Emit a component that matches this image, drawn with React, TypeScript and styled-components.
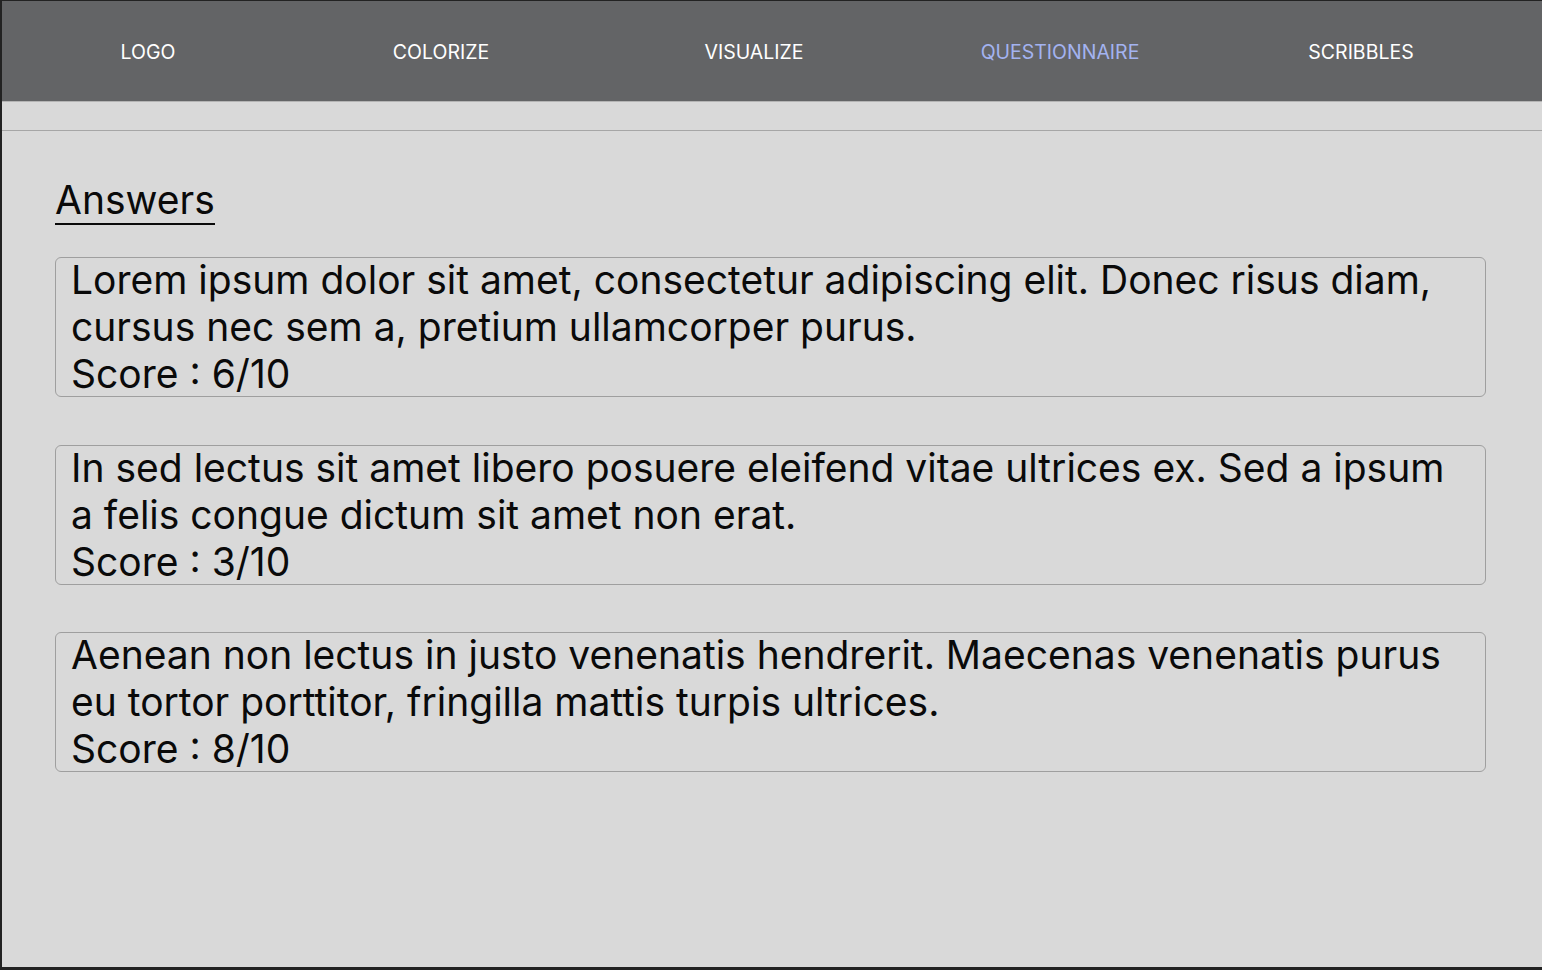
import { createGlobalStyle, styled } from 'styled-components';

const GlobalStyle = createGlobalStyle`
  html, body {
    margin: 0;
    padding: 0;
    background: #222222;
  }
  body {
    font-family: Inter, "Noto Sans", sans-serif;
  }
`;

interface INavItem {
  label: string;
  active?: boolean;
}

interface IAnswer {
  text: string;
  score: number;
}

const navItems: INavItem[] = [
  { label: 'LOGO' },
  { label: 'COLORIZE' },
  { label: 'VISUALIZE' },
  { label: 'QUESTIONNAIRE', active: true },
  { label: 'SCRIBBLES' },
];

const answers: IAnswer[] = [
  {
    text: 'Lorem ipsum dolor sit amet, consectetur adipiscing elit. Donec risus diam, cursus nec sem a, pretium ullamcorper purus.',
    score: 6,
  },
  {
    text: 'In sed lectus sit amet libero posuere eleifend vitae ultrices ex. Sed a ipsum a felis congue dictum sit amet non erat.',
    score: 3,
  },
  {
    text: 'Aenean non lectus in justo venenatis hendrerit. Maecenas venenatis purus eu tortor porttitor, fringilla mattis turpis ultrices.',
    score: 8,
  },
];

const App = () => {
  return (
    <>
      <GlobalStyle />
      <Frame>
        <NavBar>
          {navItems.map((item) => (
            <NavLink key={item.label} $active={item.active}>
              {item.label}
            </NavLink>
          ))}
        </NavBar>
        <SubBar />
        <Main>
          <Heading>Answers</Heading>
          <AnswerList>
            {answers.map((answer) => (
              <AnswerCard key={answer.score}>
                <AnswerText>{answer.text}</AnswerText>
                <Score>Score : {answer.score}/10</Score>
              </AnswerCard>
            ))}
          </AnswerList>
        </Main>
      </Frame>
    </>
  );
};

const Frame = styled.div`
  box-sizing: border-box;
  width: 1542px;
  height: 970px;
  display: flex;
  flex-direction: column;
  border-top: 1px solid #222222;
  border-left: 2px solid #222222;
  border-bottom: 3px solid #222222;
  background: #d9d9d9;
  overflow: hidden;
`;

const NavBar = styled.nav`
  height: 100px;
  flex-shrink: 0;
  display: grid;
  grid-template-columns: 292px 294px 332px 280px 322px;
  align-items: center;
  background: #636466;
  border-bottom: 1px solid #b4b4b4;
`;

const NavLink = styled.a<{ $active?: boolean }>`
  justify-self: center;
  padding-top: 1px;
  font-size: 19.5px;
  color: ${({ $active }) => ($active ? '#a3b3f0' : '#ffffff')};
  cursor: pointer;
`;

const SubBar = styled.div`
  height: 28px;
  flex-shrink: 0;
  border-bottom: 1px solid #a6a6a6;
`;

const Main = styled.main`
  padding: 45px 56px 0 53px;
`;

const Heading = styled.h2`
  display: inline-block;
  margin: 0 0 32px;
  font-size: 39px;
  font-weight: 400;
  line-height: 47px;
  color: #0a0a0a;
  border-bottom: 2px solid #0a0a0a;
`;

const AnswerList = styled.div`
  display: flex;
  flex-direction: column;
  gap: 47.5px;
`;

const AnswerCard = styled.div`
  box-sizing: border-box;
  height: 140px;
  border: 1px solid #9f9f9f;
  border-radius: 6px;
  padding: 0 24px 0 15px;
  font-size: 39px;
  line-height: 47px;
  color: #0a0a0a;
`;

const AnswerText = styled.div`
  margin-top: -2px;
`;

const Score = styled.div``;

export default App;
